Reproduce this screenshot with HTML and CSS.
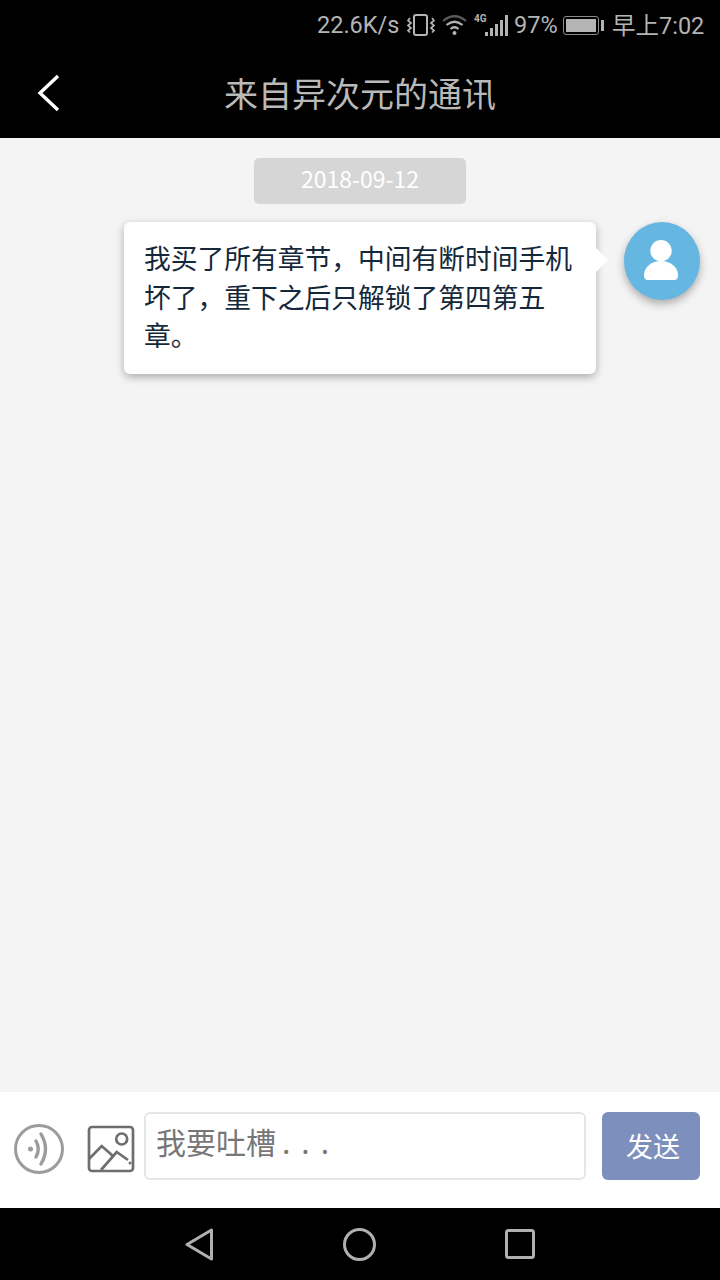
FILE: index.html
```html
<!DOCTYPE html>
<html lang="zh-CN">
<head>
    <meta charset="UTF-8">
    <title>来自异次元的通讯</title>
    <link rel="stylesheet" href="styles.css">
</head>
<body>
<div class="screen">

    <div class="status-bar">
        <span class="speed">22.6K/s</span>
        <svg class="ic-vibrate" width="28" height="24" viewBox="0 0 28 24" fill="none" stroke="#b4b4b4">
            <rect x="7" y="2" width="13" height="20" rx="2" stroke-width="2"/>
            <path d="M3 5l-2 2.500 3 2.500-3 2.500 3 2.500-3 2.500 2 2M25 5l2 2.500-3 2.500 3 2.500-3 2.500 3 2.500-2 2" stroke-width="1.700"/>
        </svg>
        <svg class="ic-wifi" width="25" height="22" viewBox="0 0 25 22" fill="none">
            <path d="M1 7Q12.500 -2.500 24 7" stroke="#5a5a5a" stroke-width="2.200"/>
            <path d="M4.500 11Q12.500 4.500 20.500 11" stroke="#b4b4b4" stroke-width="2.200"/>
            <path d="M8.500 15Q12.500 11.500 16.500 15" stroke="#b4b4b4" stroke-width="2.200"/>
            <circle cx="12.500" cy="19" r="2" fill="#b4b4b4"/>
        </svg>
        <span class="net">
            <span class="net-label">4G</span>
            <span class="bars">
                <i class="b1"></i><i class="b2"></i><i class="b3"></i><i class="b4"></i><i class="b5"></i>
            </span>
        </span>
        <span class="pct">97%</span>
        <span class="battery"><span class="battery-fill"></span></span>
        <span class="battery-tip"></span>
        <span class="clock">早上7:02</span>
    </div>

    <div class="title-bar">
        <svg class="back" width="24" height="38" viewBox="0 0 24 38" fill="none" stroke="#fff" stroke-width="3.400">
            <path d="M21 2L3 19l18 17"/>
        </svg>
        <h1>来自异次元的通讯</h1>
    </div>

    <div class="chat">
        <div class="date">2018-09-12</div>
        <div class="msg-row">
            <div class="bubble">我买了所有章节，中间有断时间手机坏了，重下之后只解锁了第四第五章。</div>
            <div class="avatar">
                <svg class="avatar-icon" width="34" height="40" viewBox="0 0 34 40" fill="#fff">
                    <circle cx="17" cy="10.700" r="10.700"/>
                    <path d="M0 35c0-8 8-14 17-14s17 6 17 14c0 3-1 5-4 5H4c-3 0-4-2-4-5z"/>
                </svg>
            </div>
        </div>
    </div>

    <div class="input-bar">
        <svg class="ic-voice" width="52" height="52" viewBox="0 0 52 52" fill="none" stroke="#9c9c9c">
            <circle cx="26" cy="26" r="23.500" stroke-width="3"/>
            <circle cx="17.500" cy="26" r="2.500" fill="#9c9c9c" stroke="none"/>
            <path d="M23 18q4.500 8 0 16M28 11q9 15 0 30" stroke-width="3.400" stroke-linecap="round"/>
        </svg>
        <svg class="ic-image" width="48" height="48" viewBox="0 0 48 48" fill="none" stroke="#6e6e6e" stroke-width="2.700">
            <rect x="2" y="2" width="44" height="44" rx="3"/>
            <circle cx="34.700" cy="14" r="5.500"/>
            <path d="M2 34l12.700-13 11.300 10M14 45l15.700-18 11.300 8"/>
            <circle cx="43" cy="38" r="1.500" fill="#6e6e6e" stroke="none"/>
        </svg>
        <div class="input">我要吐槽<span class="dots">...</span></div>
        <button class="send">发送</button>
    </div>

    <div class="nav-bar">
        <svg width="28" height="33" viewBox="0 0 28 33" fill="none" stroke="#b0b0b0" stroke-width="3" stroke-linejoin="round">
            <path d="M2 16.500L26.500 2v29z"/>
        </svg>
        <svg width="33" height="33" viewBox="0 0 33 33" fill="none" stroke="#b0b0b0" stroke-width="3">
            <circle cx="16.500" cy="16.500" r="15"/>
        </svg>
        <svg class="nav-square" width="30" height="30" viewBox="0 0 30 30" fill="none" stroke="#b0b0b0" stroke-width="3">
            <rect x="1.500" y="1.500" width="27" height="27" rx="2"/>
        </svg>
    </div>

</div>
</body>
</html>
```

FILE: styles.css
```css
* {
    box-sizing: border-box;
}
html, body {
    margin: 0;
    padding: 0;
}
body {
    font-family: "Noto Sans CJK SC", "Noto Sans", sans-serif;
    background-color: #f4f4f4;
}
.screen {
    width: 720px;
    height: 1280px;
    display: flex;
    flex-direction: column;
    overflow: hidden;
}

.status-bar {
    height: 50px;
    background-color: #000;
    color: #b4b4b4;
    display: flex;
    align-items: center;
    padding-left: 317px;
    font-family: Roboto, "Noto Sans CJK SC", sans-serif;
    font-size: 23.500px;
    flex-shrink: 0;
}
.speed {
    width: 82px;
    margin-right: 8px;
    white-space: nowrap;
}
.ic-wifi {
    margin-left: 7px;
}
.net {
    position: relative;
    width: 34px;
    height: 24px;
    margin: 0 6px 0 7px;
}
.net-label {
    position: absolute;
    left: 0;
    top: 0;
    font-size: 10px;
    font-weight: 700;
    line-height: 12px;
}
.bars {
    position: absolute;
    right: 0;
    bottom: 1px;
    display: flex;
    align-items: flex-end;
    gap: 2px;
}
.bars i {
    display: block;
    width: 3px;
    background-color: #b4b4b4;
}
.b1 { height: 4px; }
.b2 { height: 8px; }
.b3 { height: 12px; }
.b4 { height: 16px; }
.b5 { height: 21px; }
.pct {
    width: 42px;
    margin-right: 7px;
    white-space: nowrap;
}
.battery {
    width: 36px;
    height: 19px;
    border: 1.500px solid #8a8a8a;
    border-radius: 3px;
    padding: 2px;
    display: block;
}
.battery-fill {
    display: block;
    height: 100%;
    background-color: #b4b4b4;
}
.battery-tip {
    width: 3px;
    height: 11px;
    margin-left: 2px;
    background-color: #b4b4b4;
}
.clock {
    margin: 0 0 3px 8px;
    white-space: nowrap;
}

.title-bar {
    height: 88px;
    padding-bottom: 4px;
    background-color: #000;
    position: relative;
    display: flex;
    align-items: center;
    justify-content: center;
    flex-shrink: 0;
}
.title-bar h1 {
    margin: 0;
    color: #b9b9b9;
    font-size: 34px;
    font-weight: 400;
}
.back {
    position: absolute;
    left: 37px;
    top: 24px;
}

.chat {
    flex: 1;
    padding-top: 20px;
}
.date {
    width: 212px;
    height: 46px;
    margin: 0 auto 18px;
    background-color: #d6d6d6;
    border-radius: 5px;
    color: #fff;
    font-size: 23px;
    line-height: 41px;
    text-align: center;
}
.msg-row {
    display: flex;
    justify-content: flex-end;
    align-items: flex-start;
    padding-right: 20px;
}
.bubble {
    position: relative;
    width: 472px;
    height: 152px;
    margin-right: 28px;
    padding: 17px 20px;
    background-color: #fff;
    border-radius: 6px;
    box-shadow: 0 3px 8px rgba(0,0,0,0.3);
    color: #14283a;
    font-size: 26.750px;
    line-height: 38.500px;
}
.bubble::after {
    content: "";
    position: absolute;
    right: -12px;
    top: 26px;
    border-left: 12px solid #fff;
    border-top: 12px solid transparent;
    border-bottom: 12px solid transparent;
}
.avatar {
    width: 76px;
    height: 78px;
    border-radius: 50%;
    background-color: #65b7e2;
    box-shadow: 0 4px 8px rgba(0,0,0,0.3);
    display: flex;
    align-items: center;
    justify-content: center;
}
.avatar-icon {
    margin: 0 2px 2px 0;
}

.input-bar {
    height: 116px;
    background-color: #fff;
    display: flex;
    align-items: flex-start;
    flex-shrink: 0;
    padding: 20px 20px 0 13px;
}
.ic-voice {
    margin: 11px 22px 0 0;
    flex-shrink: 0;
}
.ic-image {
    margin: 13px 9px 0 0;
    flex-shrink: 0;
}
.input {
    width: 442px;
    height: 68px;
    border: 2px solid #e6e6e6;
    border-radius: 6px;
    padding-left: 10px;
    color: #777;
    font-size: 30px;
    line-height: 55px;
    flex-shrink: 0;
}
.dots {
    margin-left: 6px;
    letter-spacing: 11px;
}
.send {
    width: 98px;
    height: 68px;
    margin-left: 16px;
    border: none;
    border-radius: 6px;
    background-color: #7d8fbd;
    color: #fff;
    font-family: inherit;
    font-size: 27px;
    padding: 0 0 2px 4px;
    flex-shrink: 0;
}

.nav-bar {
    height: 72px;
    background-color: #000;
    display: flex;
    align-items: center;
    padding-left: 185px;
    gap: 130px;
    flex-shrink: 0;
}
.nav-square {
    margin-left: -1px;
}
```
